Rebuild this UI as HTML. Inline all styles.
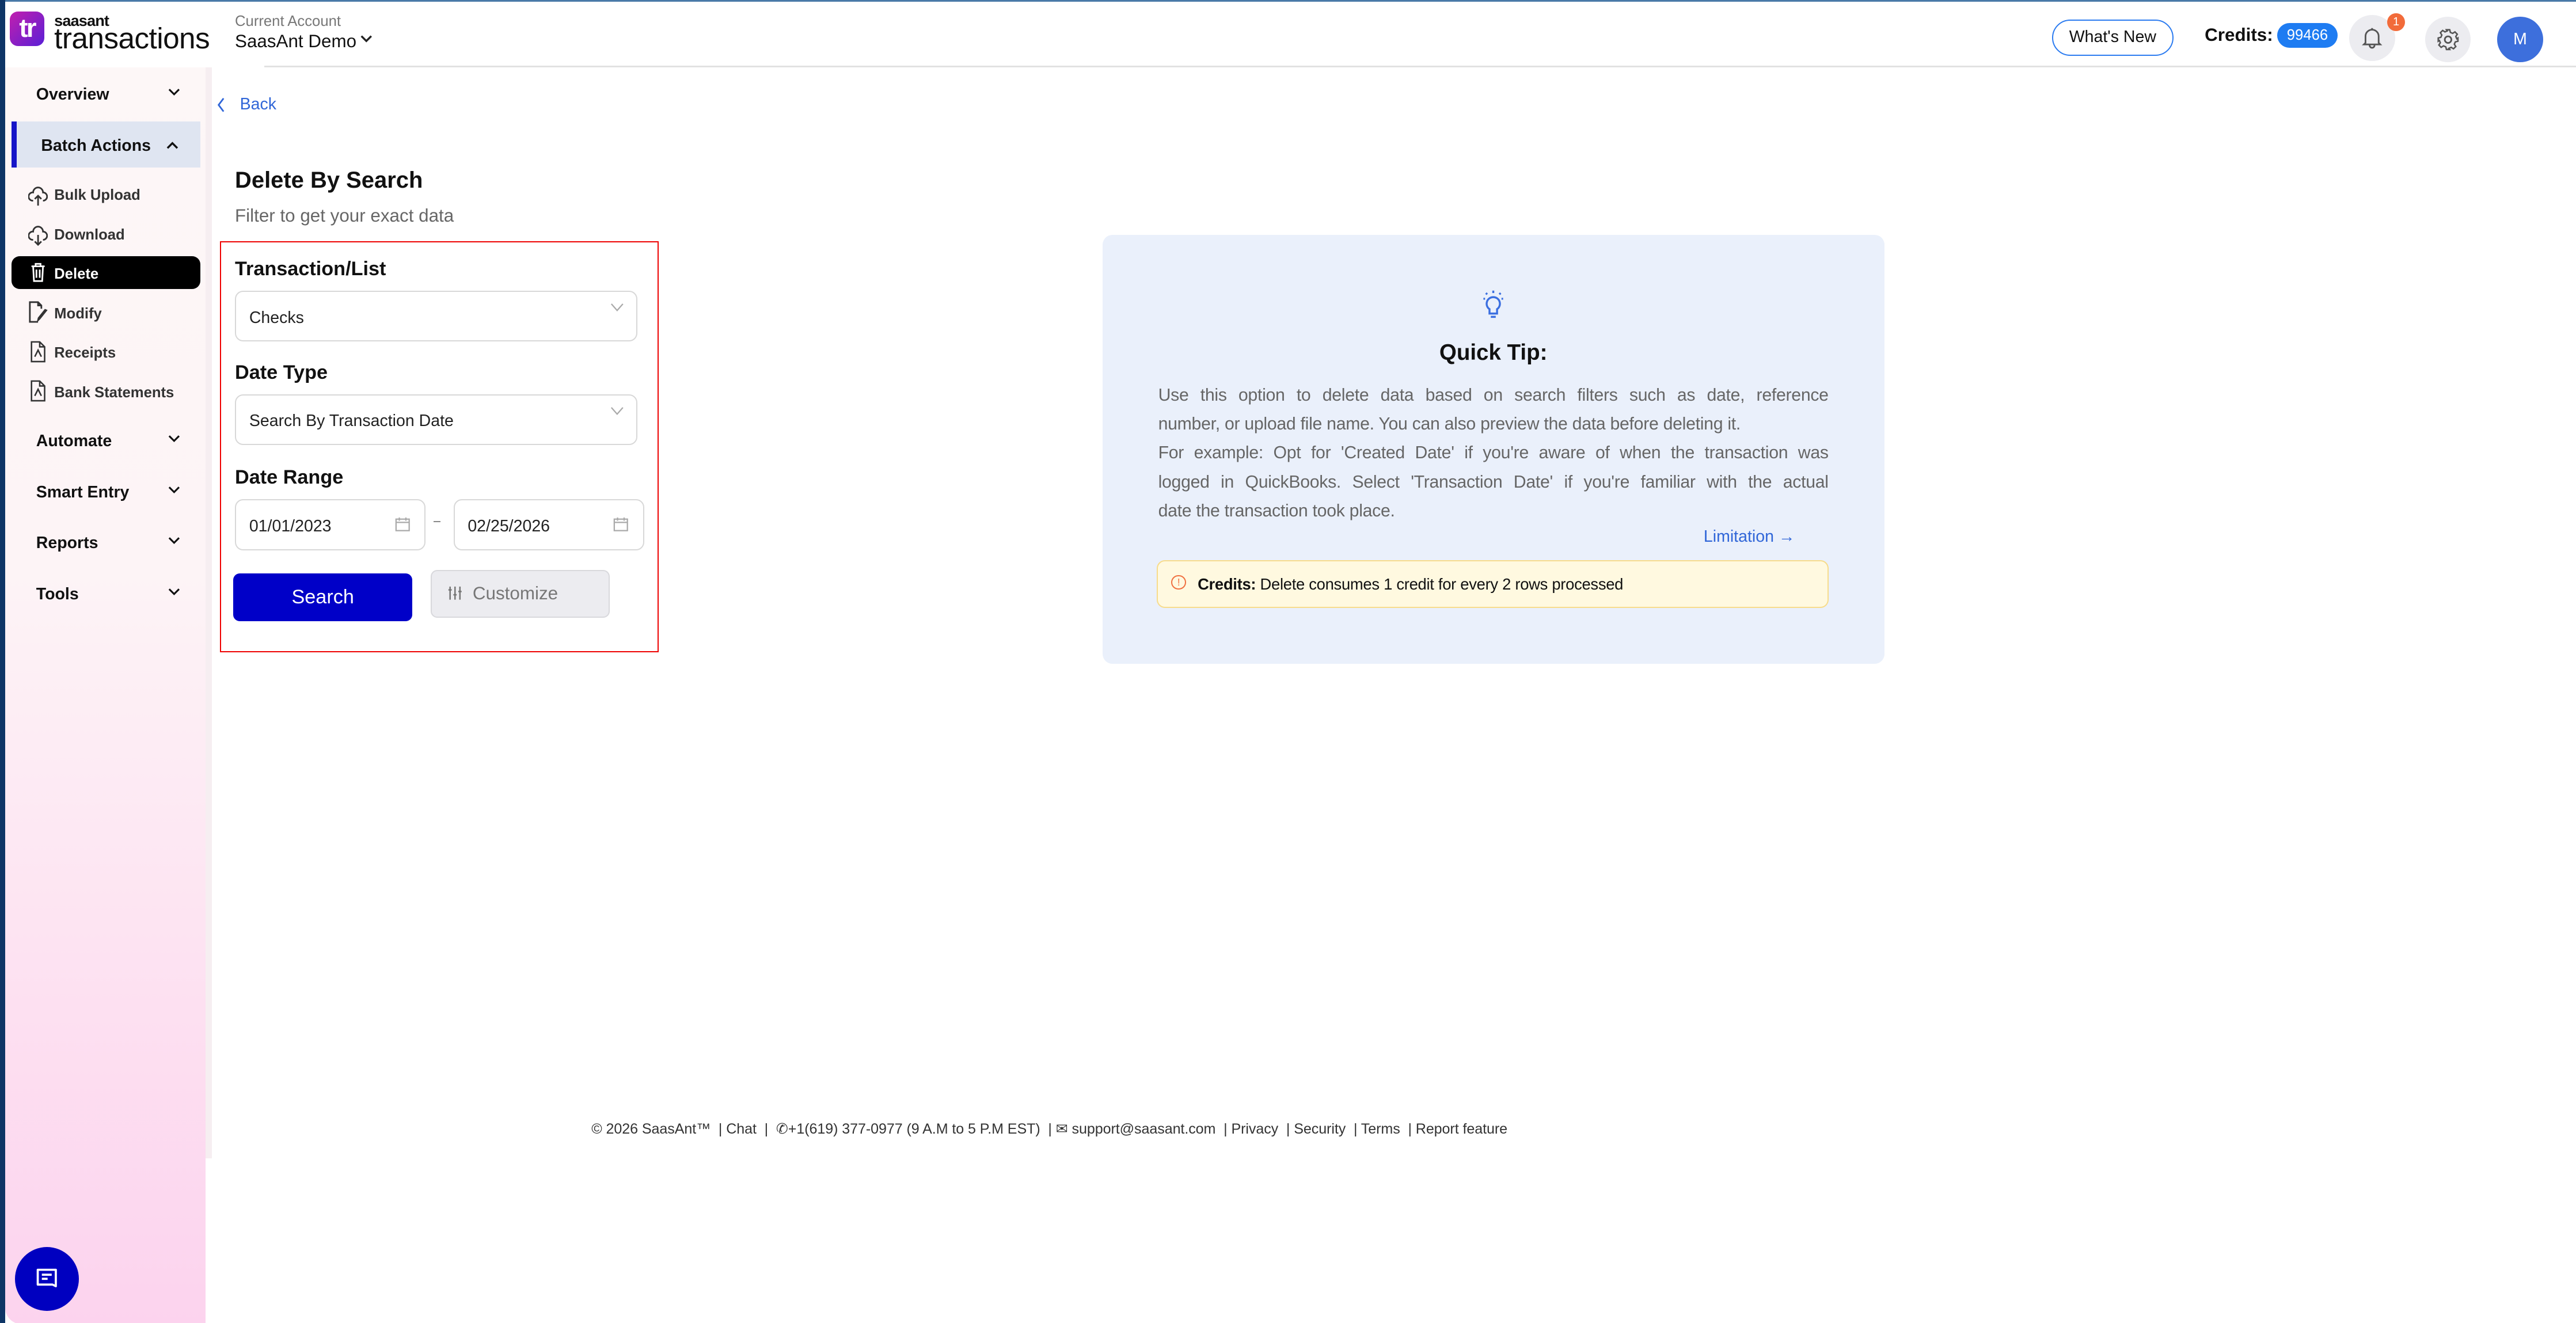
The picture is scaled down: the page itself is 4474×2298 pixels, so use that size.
<!DOCTYPE html>
<html><head><meta charset="utf-8"><style>
html,body{margin:0;padding:0}
body{width:4474px;height:2298px;overflow:hidden;background:#fff;font-family:"Liberation Sans",sans-serif}
#r{zoom:2.85332;width:1568px;height:805.4px;position:relative;background:#fff;overflow:hidden;color:#111}
.a{position:absolute}
.side{left:3px;top:41px;width:122px;height:765px;background:linear-gradient(#fdf7f7 0%,#fdf4f6 40%,#fde0f1 75%,#fcd3ee 100%);border-bottom-left-radius:10px}
.nav{font-size:10px;font-weight:bold;color:#111}
.sub{font-size:9px;font-weight:bold;color:#333}
.lbl{font-size:12px;font-weight:bold;color:#111}
.inp{border:1px solid #d8d8d8;border-radius:5px;background:#fff;font-size:10px;color:#222;box-sizing:border-box}
.tip span{display:block;text-align:justify;text-align-last:justify;white-space:nowrap}
.tip span.l{text-align-last:left}
</style></head><body><div id="r">
<div class="a" style="left:0;top:0;width:1568px;height:1px;background:#4a7aa8"></div>
<div class="a" style="left:0;top:0;width:3px;height:806px;background:#0e3566"></div>
<div class="a" style="left:161px;top:40px;width:1407px;height:1px;background:#e2e2e2"></div>
<!-- logo -->
<div class="a" style="left:6px;top:7px;width:21px;height:21px;border-radius:5px;background:linear-gradient(135deg,#c21fae,#5a1fd6);color:#fff;font-weight:bold;font-size:16px;line-height:20px;text-align:center;letter-spacing:-1px">tr</div>
<div class="a" style="left:33px;top:7px;font-size:9.5px;font-weight:bold;color:#111;letter-spacing:-0.3px">saasant</div>
<div class="a" style="left:33px;top:13px;font-size:18px;color:#111;letter-spacing:-0.2px">transactions</div>
<div class="a" style="left:143px;top:8px;font-size:9px;color:#777">Current Account</div>
<div class="a" style="left:143px;top:19px;font-size:11px;color:#111">SaasAnt Demo</div>
<svg class="a" style="left:218px;top:20px" width="10" height="8" viewBox="0 0 10 8"><path d="M2 2l3 3 3-3" fill="none" stroke="#222" stroke-width="1.2"/></svg>
<!-- header right -->
<div class="a" style="left:1249px;top:12px;width:74px;height:22px;border:1px solid #2b7bf0;border-radius:12px;box-sizing:border-box;font-size:10px;line-height:20px;text-align:center;color:#111">What's New</div>
<div class="a" style="left:1342px;top:15px;font-size:11px;font-weight:bold">Credits:</div>
<div class="a" style="left:1386px;top:14px;width:37px;height:15px;border-radius:8px;background:#1e7cf2;color:#fff;font-size:9px;line-height:15px;text-align:center">99466</div>
<div class="a" style="left:1430px;top:9px;width:28px;height:28px;border-radius:50%;background:#ececf0"></div>
<svg class="a" style="left:1436px;top:15px" width="16" height="16" viewBox="0 0 16 16"><path d="M4 11V7a4 4 0 018 0v4l1 1H3z M6.5 12.5a1.5 1.5 0 003 0 M8 2v1" fill="none" stroke="#555" stroke-width="1"/></svg>
<div class="a" style="left:1453px;top:8px;width:11px;height:11px;border-radius:50%;background:#f26b3a;color:#fff;font-size:7px;line-height:11px;text-align:center">1</div>
<div class="a" style="left:1476px;top:10px;width:28px;height:28px;border-radius:50%;background:#ececf0"></div>
<svg class="a" style="left:1482px;top:16px" width="16" height="16" viewBox="0 0 16 16"><circle cx="8" cy="8" r="2" fill="none" stroke="#555"/><path d="M7 2h2l.4 1.6 1.4.6 1.4-.9 1.4 1.4-.9 1.4.6 1.4L14 7v2l-1.6.4-.6 1.4.9 1.4-1.4 1.4-1.4-.9-1.4.6L9 14H7l-.4-1.6-1.4-.6-1.4.9-1.4-1.4.9-1.4-.6-1.4L2 9V7l1.6-.4.6-1.4-.9-1.4 1.4-1.4 1.4.9 1.4-.6z" fill="none" stroke="#555" stroke-width=".9"/></svg>
<div class="a" style="left:1520px;top:10px;width:28px;height:28px;border-radius:50%;background:#3d6fdc;color:#fff;font-size:10px;line-height:28px;text-align:center">M</div>
<!-- sidebar -->
<div class="a side"></div>
<div class="a" style="left:125px;top:41px;width:4px;height:664px;background:#f6eef1"></div>
<div class="a nav" style="left:22px;top:52px">Overview</div>
<svg class="a" style="left:102px;top:53px" width="8" height="6" viewBox="0 0 8 6"><path d="M1 1.5l3 3 3-3" fill="none" stroke="#111" stroke-width="1.1"/></svg>
<div class="a" style="left:7px;top:74px;width:115px;height:28px;background:#dfe5f1"></div>
<div class="a" style="left:7px;top:74px;width:3px;height:28px;background:#1515c8"></div>
<div class="a nav" style="left:25px;top:83px">Batch Actions</div>
<svg class="a" style="left:101px;top:85px" width="8" height="6" viewBox="0 0 8 6"><path d="M1 5l3-3 3 3" fill="none" stroke="#111" stroke-width="1.2"/></svg>
<svg class="a" style="left:17px;top:112px" width="12" height="14" viewBox="0 0 12 14"><path d="M3 10H2.5A2.5 2.5 0 013 5a3 3 0 016 0 2.5 2.5 0 010 5M6 13V7M4 9l2-2 2 2" fill="none" stroke="#333" stroke-width="1"/></svg>
<div class="a sub" style="left:33px;top:114px">Bulk Upload</div>
<svg class="a" style="left:17px;top:136px" width="12" height="14" viewBox="0 0 12 14"><path d="M3 10H2.5A2.5 2.5 0 013 5a3 3 0 016 0 2.5 2.5 0 010 5M6 7v6M4 11l2 2 2-2" fill="none" stroke="#333" stroke-width="1"/></svg>
<div class="a sub" style="left:33px;top:138px">Download</div>
<div class="a" style="left:7px;top:156px;width:115px;height:20px;background:#000;border-radius:5px"></div>
<svg class="a" style="left:17px;top:159px" width="12" height="14" viewBox="0 0 12 14"><path d="M2 3h8M4.5 3V1.5h3V3M3 3l.5 9h5L9 3M5 5v5M7 5v5" fill="none" stroke="#fff" stroke-width="1"/></svg>
<div class="a sub" style="left:33px;top:162px;color:#fff">Delete</div>
<svg class="a" style="left:17px;top:183px" width="12" height="14" viewBox="0 0 12 14"><path d="M8 5V3L6 1H1v12h5M6 1v2h2M11 6l-4 5-1 1 .3-1.3 4-5z" fill="none" stroke="#333" stroke-width="1"/></svg>
<div class="a sub" style="left:33px;top:186px">Modify</div>
<svg class="a" style="left:17px;top:207px" width="12" height="14" viewBox="0 0 12 14"><path d="M2 1h5l3 3v9H2zM7 1v3h3M4 10l2-4 2 4" fill="none" stroke="#333" stroke-width=".9"/></svg>
<div class="a sub" style="left:33px;top:210px">Receipts</div>
<svg class="a" style="left:17px;top:231px" width="12" height="14" viewBox="0 0 12 14"><path d="M2 1h5l3 3v9H2zM7 1v3h3M4 10l2-4 2 4" fill="none" stroke="#333" stroke-width=".9"/></svg>
<div class="a sub" style="left:33px;top:234px">Bank Statements</div>
<div class="a nav" style="left:22px;top:263px">Automate</div>
<svg class="a" style="left:102px;top:264px" width="8" height="6" viewBox="0 0 8 6"><path d="M1 1.5l3 3 3-3" fill="none" stroke="#111" stroke-width="1.1"/></svg>
<div class="a nav" style="left:22px;top:294px">Smart Entry</div>
<svg class="a" style="left:102px;top:295px" width="8" height="6" viewBox="0 0 8 6"><path d="M1 1.5l3 3 3-3" fill="none" stroke="#111" stroke-width="1.1"/></svg>
<div class="a nav" style="left:22px;top:325px">Reports</div>
<svg class="a" style="left:102px;top:326px" width="8" height="6" viewBox="0 0 8 6"><path d="M1 1.5l3 3 3-3" fill="none" stroke="#111" stroke-width="1.1"/></svg>
<div class="a nav" style="left:22px;top:356px">Tools</div>
<svg class="a" style="left:102px;top:357px" width="8" height="6" viewBox="0 0 8 6"><path d="M1 1.5l3 3 3-3" fill="none" stroke="#111" stroke-width="1.1"/></svg>
<div class="a" style="left:9px;top:759px;width:39px;height:39px;border-radius:50%;background:#0000c0"></div>
<svg class="a" style="left:20px;top:770px" width="17" height="17" viewBox="0 0 17 17"><path d="M3 3h11v10l-2-1H3z M5.5 6h6M5.5 8.5h3.5" fill="none" stroke="#fff" stroke-width="1.3" stroke-linejoin="round"/></svg>
<!-- main -->
<svg class="a" style="left:131px;top:59px" width="8" height="10" viewBox="0 0 8 10"><path d="M5 1L2 5l3 4" fill="none" stroke="#3066d8" stroke-width="1"/></svg>
<div class="a" style="left:146px;top:58px;font-size:10px;color:#3066d8">Back</div>
<div class="a" style="left:143px;top:102px;font-size:14px;font-weight:bold">Delete By Search</div>
<div class="a" style="left:143px;top:125px;font-size:11px;color:#666">Filter to get your exact data</div>
<div class="a" style="left:134px;top:147px;width:267px;height:250px;border:1px solid #e00;box-sizing:border-box"></div>
<div class="a lbl" style="left:143px;top:157px">Transaction/List</div>
<div class="a inp" style="left:143px;top:177px;width:245px;height:31px;padding:10px 0 0 8px">Checks</div>
<svg class="a" style="left:371px;top:184px" width="9" height="7" viewBox="0 0 9 7"><path d="M1 1l3.5 4L8 1" fill="none" stroke="#aaa" stroke-width=".8"/></svg>
<div class="a lbl" style="left:143px;top:220px">Date Type</div>
<div class="a inp" style="left:143px;top:240px;width:245px;height:31px;padding:10px 0 0 8px">Search By Transaction Date</div>
<svg class="a" style="left:371px;top:247px" width="9" height="7" viewBox="0 0 9 7"><path d="M1 1l3.5 4L8 1" fill="none" stroke="#aaa" stroke-width=".8"/></svg>
<div class="a lbl" style="left:143px;top:284px">Date Range</div>
<div class="a inp" style="left:143px;top:304px;width:116px;height:31px;padding:10px 0 0 8px">01/01/2023</div>
<div class="a" style="left:264px;top:317px;width:4px;height:1px;background:#888"></div>
<div class="a inp" style="left:276px;top:304px;width:116px;height:31px;padding:10px 0 0 8px">02/25/2026</div>
<svg class="a" style="left:240px;top:314px" width="10" height="10" viewBox="0 0 10 10"><rect x="1" y="2" width="8" height="7" fill="none" stroke="#aaa" stroke-width=".8"/><path d="M1 4h8M3 1v2M7 1v2" stroke="#aaa" stroke-width=".8"/></svg>
<svg class="a" style="left:373px;top:314px" width="10" height="10" viewBox="0 0 10 10"><rect x="1" y="2" width="8" height="7" fill="none" stroke="#aaa" stroke-width=".8"/><path d="M1 4h8M3 1v2M7 1v2" stroke="#aaa" stroke-width=".8"/></svg>
<div class="a" style="left:142px;top:349px;width:109px;height:29px;background:#0000c8;border-radius:4px;color:#fff;font-size:12px;line-height:29px;text-align:center">Search</div>
<div class="a" style="left:262px;top:347px;width:109px;height:29px;background:#ececf0;border:1px solid #d8d8dc;box-sizing:border-box;border-radius:4px;color:#777;font-size:11px;line-height:27px;padding-left:25px">Customize</div>
<svg class="a" style="left:272px;top:356px" width="10" height="10" viewBox="0 0 10 10"><path d="M2 1v8M5 1v8M8 1v8M1 3h2M4 6h2M7 4h2" stroke="#777" stroke-width=".9"/></svg>
<!-- quick tip -->
<div class="a" style="left:671px;top:143px;width:476px;height:261px;background:#eaf0fb;border-radius:6px"></div>
<svg class="a" style="left:899px;top:175px" width="20" height="22" viewBox="0 0 20 22"><path d="M10 6a4 4 0 00-2.3 7.3V16h4.6v-2.7A4 4 0 0010 6zM8.5 18h3" fill="none" stroke="#3b6fe0" stroke-width="1.2"/><path d="M10 2v1.5M4 7h1M15 7h1M5.5 3.5l.8.8M14.5 3.5l-.8.8" stroke="#3b6fe0" stroke-width="1.2"/></svg>
<div class="a" style="left:671px;top:207px;width:476px;text-align:center;font-size:13.5px;font-weight:bold">Quick Tip:</div>
<div class="a tip" style="left:705px;top:232px;width:408px;font-size:10.6px;line-height:17.6px;color:#666;letter-spacing:-0.1px"><span>Use this option to delete data based on search filters such as date, reference</span><span class="l">number, or upload file name. You can also preview the data before deleting it.</span><span>For example: Opt for 'Created Date' if you're aware of when the transaction was</span><span>logged in QuickBooks. Select 'Transaction Date' if you're familiar with the actual</span><span class="l">date the transaction took place.</span></div>
<div class="a" style="left:1037px;top:321px;font-size:10px;color:#3066d8">Limitation &#8594;</div>
<div class="a" style="left:704px;top:341px;width:409px;height:29px;background:#fff9e0;border:1px solid #f7dc8c;box-sizing:border-box;border-radius:5px"></div>
<div class="a" style="left:713px;top:350px;width:9px;height:9px;border:1px solid #f07040;border-radius:50%;box-sizing:border-box;font-size:6px;line-height:8px;text-align:center;color:#f07040">!</div>
<div class="a" style="left:729px;top:350px;font-size:9.6px;color:#111;letter-spacing:-0.1px"><b>Credits:</b> Delete consumes 1 credit for every 2 rows processed</div>
<!-- footer -->
<div class="a" style="left:360px;top:682px;font-size:8.8px;color:#333;white-space:nowrap;letter-spacing:-0.03px">© 2026 SaasAnt™ &nbsp;| Chat &nbsp;| &nbsp;&#9990;+1(619) 377-0977 (9 A.M to 5 P.M EST) &nbsp;| &#9993; support@saasant.com &nbsp;| Privacy &nbsp;| Security &nbsp;| Terms &nbsp;| Report feature</div>
</div></body></html>
